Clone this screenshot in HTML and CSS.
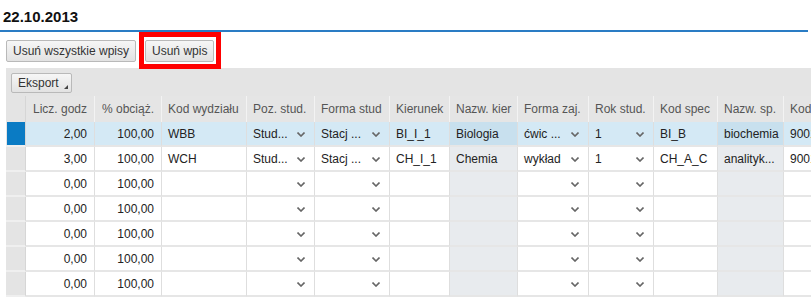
FILE: index.html
```html
<!DOCTYPE html>
<html lang="pl">
<head>
  <meta charset="UTF-8">
  <title>22.10.2013</title>
  <link rel="stylesheet" href="styles.css">
</head>
<body>
  <div class="title">22.10.2013</div>

  <div class="actions">
    <button type="button" class="btn">Usuń wszystkie wpisy</button>
    <span class="highlight"><button type="button" class="btn">Usuń wpis</button></span>
  </div>

  <div class="grid">
    <div class="toolbar">
      <button type="button" class="btn btn-menu">Eksport</button>
    </div>
    <table class="entries">
      <colgroup>
        <col class="c-sel"><col class="c-w69"><col class="c-w67"><col class="c-w85">
        <col class="c-w68"><col class="c-w75"><col class="c-w60"><col class="c-w68">
        <col class="c-w71"><col class="c-w65"><col class="c-w64"><col class="c-w66"><col class="c-w86">
      </colgroup>
      <thead>
        <tr>
          <th class="sel"></th>
          <th class="num">Licz. godz</th>
          <th class="num">% obciąż.</th>
          <th>Kod wydziału</th>
          <th>Poz. stud.</th>
          <th>Forma stud</th>
          <th>Kierunek</th>
          <th>Nazw. kier</th>
          <th>Forma zaj.</th>
          <th>Rok stud.</th>
          <th>Kod spec</th>
          <th>Nazw. sp.</th>
          <th>Kod spec. sp.</th>
        </tr>
      </thead>
      <tbody id="rows"></tbody>
    </table>
  </div>

  <script>
    // entries shown in the grid; empty rows keep their defaults
    var entries = [
      { hours: '2,00', load: '100,00', faculty: 'WBB', level: 'Stud...', form: 'Stacj ...', course: 'BI_I_1', courseName: 'Biologia', classForm: 'ćwic ...', year: '1', spec: 'BI_B', specName: 'biochemia', code: '9001', selected: true },
      { hours: '3,00', load: '100,00', faculty: 'WCH', level: 'Stud...', form: 'Stacj ...', course: 'CH_I_1', courseName: 'Chemia', classForm: 'wykład', year: '1', spec: 'CH_A_C', specName: 'analityk...', code: '9001' }
    ];
    for (var i = 0; i < 5; i++) {
      entries.push({ hours: '0,00', load: '100,00', faculty: '', level: '', form: '', course: '', courseName: '', classForm: '', year: '', spec: '', specName: '', code: '' });
    }

    var chevron = '<svg class="chev" width="8" height="5" viewBox="0 0 8 5"><path d="M0.5 0.5 L4 4 L7.5 0.5" fill="none" stroke="#666" stroke-width="1.6"/></svg>';

    function dropCell(text) {
      return '<td class="drop"><span class="drop-text">' + text + '</span>' + chevron + '</td>';
    }

    var html = '';
    entries.forEach(function(e) {
      html += '<tr' + (e.selected ? ' class="selected"' : '') + '>' +
        '<td class="sel"></td>' +
        '<td class="num">' + e.hours + '</td>' +
        '<td class="num">' + e.load + '</td>' +
        '<td>' + e.faculty + '</td>' +
        dropCell(e.level) +
        dropCell(e.form) +
        '<td>' + e.course + '</td>' +
        '<td class="ro">' + e.courseName + '</td>' +
        dropCell(e.classForm) +
        dropCell(e.year) +
        '<td>' + e.spec + '</td>' +
        '<td class="ro">' + e.specName + '</td>' +
        '<td>' + e.code + '</td>' +
        '</tr>';
    });
    document.getElementById('rows').innerHTML = html;
  </script>
</body>
</html>
```

FILE: styles.css
```css
body {
  margin: 0;
  font-family: 'Liberation Sans', Arial, sans-serif;
  font-size: 12px;
  color: #222;
  background-color: #fff;
  overflow: hidden;
}
.title {
  font-size: 15px;
  font-weight: bold;
  color: #111;
  line-height: 18px;
  padding: 8px 0 4px 3px;
  border-bottom: 2px solid #2a7cc4;
  margin-right: 3px;
}
.actions {
  display: flex;
  gap: 9px;
  padding: 8px 0 0 6px;
  height: 22px;
}
.btn {
  font-family: 'Liberation Sans', Arial, sans-serif;
  font-size: 12px;
  color: #333;
  height: 22px;
  padding: 0 6px;
  background: linear-gradient(#f6f6f6, #e2e2e2);
  border: 1px solid #b9b9b9;
  border-radius: 2px;
  cursor: pointer;
}
.highlight {
  position: relative;
  display: inline-block;
  margin-left: 0;
}
.highlight::after {
  content: '';
  position: absolute;
  left: -6px;
  top: -8px;
  right: -7px;
  bottom: -7px;
  border: 5px solid #ff0000;
  pointer-events: none;
}
.grid {
  margin: 6px 0 0 6px;
  overflow: hidden;
}
.toolbar {
  background-color: #e4e4e4;
  padding: 5px;
  height: 18px;
  width: 900px;
}
.btn-menu {
  position: relative;
  height: 20px;
  width: 61px;
  text-align: left;
  padding: 0 0 0 6px;
}
.btn-menu::after {
  content: '';
  position: absolute;
  right: 3px;
  bottom: 3px;
  border-left: 4px solid transparent;
  border-bottom: 4px solid #444;
}
.entries {
  table-layout: fixed;
  border-collapse: separate;
  border-spacing: 0;
  width: 864px;
}
.c-sel { width: 20px; }
.c-w60 { width: 60px; }
.c-w64 { width: 64px; }
.c-w65 { width: 65px; }
.c-w66 { width: 66px; }
.c-w67 { width: 67px; }
.c-w68 { width: 68px; }
.c-w69 { width: 69px; }
.c-w71 { width: 71px; }
.c-w75 { width: 75px; }
.c-w85 { width: 85px; }
.c-w86 { width: 86px; }
.entries th,
.entries td {
  box-sizing: border-box;
  padding: 0 6px;
  white-space: nowrap;
  overflow: hidden;
  text-align: left;
}
.entries th {
  height: 26px;
  font-weight: normal;
  color: #555;
  background-color: #e5e5e5;
  border-right: 1px solid #f3f3f3;
}
.entries td {
  height: 25px;
  border-right: 1px solid #dedede;
  border-bottom: 2px solid #e6e6e6;
}
.entries tbody tr:first-child td {
  border-top: 0;
}
.entries .num {
  text-align: right;
  padding-right: 7px;
}
.entries th.num {
  padding-right: 7px;
}
.entries .sel {
  padding: 0;
  background-color: #e4e4e4;
  border-right: 1px solid #d6d6d6;
}
.entries td.sel {
  border-bottom: 2px solid #efefef;
}
.entries .ro {
  background-color: #e8ebee;
}
.entries .drop {
  position: relative;
  padding-right: 20px;
}
.drop-text {
  display: block;
}
.chev {
  position: absolute;
  right: 9px;
  top: 10px;
}
.entries tr.selected td {
  background-color: #d4e9f5;
}
.entries tr.selected td.ro {
  background-color: #c8e0ee;
}
.entries tr.selected td.sel {
  background-color: #0a7bc4;
  box-shadow: inset 1px 0 0 #e4e4e4;
}
```
